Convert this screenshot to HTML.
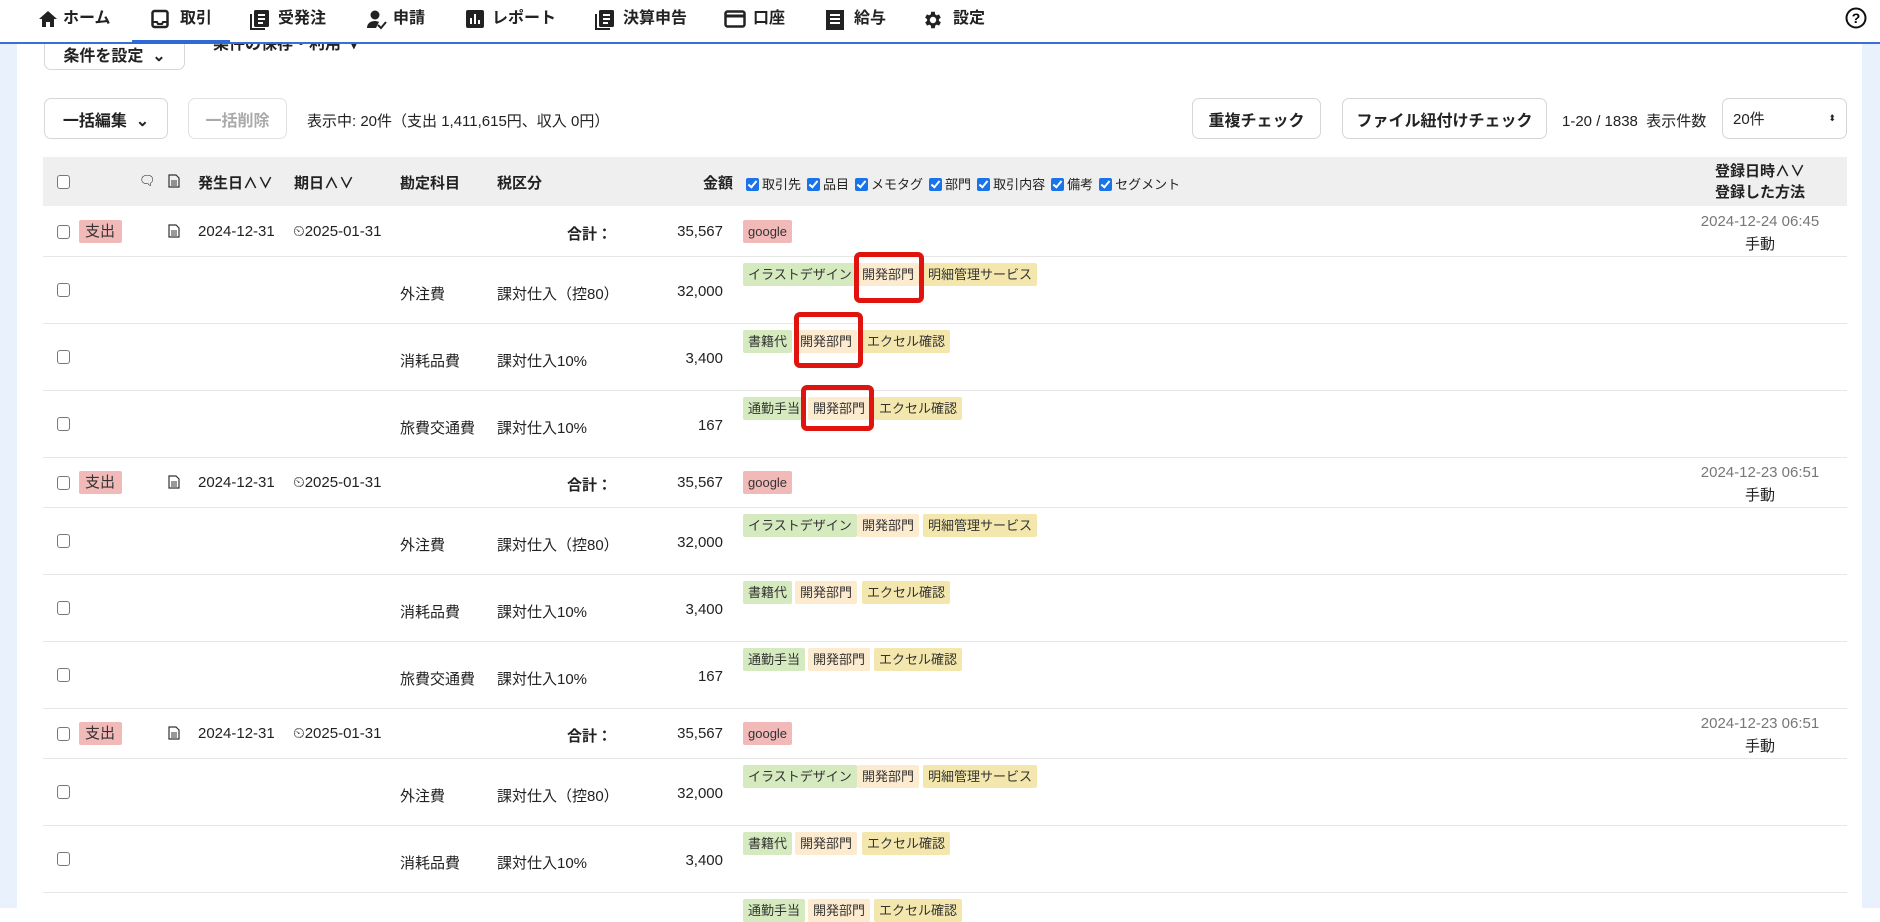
<!DOCTYPE html>
<html><head><meta charset="utf-8">
<style>
*{box-sizing:border-box;margin:0;padding:0}
body{width:1880px;height:908px;overflow:hidden;background:#fff;font-family:"Liberation Sans","Noto Sans CJK JP",sans-serif;color:#222;font-size:15px;position:relative}
.a{position:absolute;white-space:nowrap}
.nav{position:absolute;left:0;top:0;width:1880px;height:44px;border-bottom:2px solid #3b6fd8;background:#fff;z-index:5}
.ni{position:absolute;top:9px;font-weight:bold;font-size:16px;line-height:20px}
.ic{position:absolute;top:9px}
.btn{position:absolute;border:1px solid #d6d6d6;border-radius:7px;background:#fff;font-weight:bold;font-size:16px;display:flex;align-items:center;justify-content:center;white-space:nowrap}
.cb{position:absolute;width:13px;height:14px;border:1px solid #777;border-radius:3px;background:#fff}
.tag{position:absolute;height:23px;line-height:23px;font-size:13px;padding:0 5px;border-radius:2px;color:#333;white-space:nowrap}
.g{background:#d5eabf}.p{background:#fdebcf}.y{background:#f4e7ad}.r{background:#f2b9b9}
.line{position:absolute;left:43px;width:1804px;height:1px;background:#e6e6e6}
.red{position:absolute;border:5px solid #e0140e;border-radius:6px}
.r2{text-align:right}
.bc{display:inline-block;width:13px;height:13px;background:#1a73e8;border-radius:2px;vertical-align:-2px;margin:0 3px 0 6px;position:relative}
.bc:after{content:"";position:absolute;left:4px;top:1px;width:3px;height:7px;border:solid #fff;border-width:0 2px 2px 0;transform:rotate(40deg)}
</style></head><body>
<div class="a" style="left:0;top:44px;width:17px;height:864px;background:#e9f1fd"></div>
<div class="a" style="left:1862px;top:44px;width:18px;height:864px;background:#e9f1fd"></div>

<div class="nav">
<svg class="ic" style="left:38px" width="20" height="20" viewBox="0 0 20 20"><path d="M10 2L1 10h3v8h4v-5h4v5h4v-8h3z" fill="#222"/></svg>
<div class="ni" style="left:63px">ホーム</div>
<svg class="ic" style="left:150px" width="20" height="20" viewBox="0 0 20 20"><rect x="2.5" y="2" width="15" height="16" rx="2" fill="none" stroke="#222" stroke-width="2.5"/><path d="M3 13h4l1 2h4l1-2h4" fill="none" stroke="#222" stroke-width="2"/></svg>
<div class="ni" style="left:180px">取引</div>
<div class="a" style="left:132px;top:40px;width:98px;height:4px;background:#2d6ad6"></div>
<svg class="ic" style="left:249px" width="22" height="22" viewBox="0 0 22 22"><rect x="5" y="1" width="15" height="17" rx="1.5" fill="#222"/><path d="M2 5v15h14" fill="none" stroke="#222" stroke-width="2"/><path d="M9 6h7M9 10h7M9 14h5" stroke="#fff" stroke-width="2"/></svg>
<div class="ni" style="left:278px">受発注</div>
<svg class="ic" style="left:366px" width="22" height="22" viewBox="0 0 22 22"><circle cx="9" cy="6" r="4.5" fill="#222"/><path d="M1 19c0-5 4-7 8-7 2 0 3 .5 4 1l-3 6z" fill="#222"/><path d="M12 16l3 3 5-6" fill="none" stroke="#222" stroke-width="2"/></svg>
<div class="ni" style="left:393px">申請</div>
<svg class="ic" style="left:465px" width="20" height="20" viewBox="0 0 20 20"><rect x="1" y="1" width="18" height="18" rx="2" fill="#222"/><path d="M6 9v6M10 5v10M14 11v4" stroke="#fff" stroke-width="2"/></svg>
<div class="ni" style="left:492px">レポート</div>
<svg class="ic" style="left:594px" width="22" height="22" viewBox="0 0 22 22"><rect x="5" y="1" width="15" height="17" rx="1.5" fill="#222"/><path d="M2 5v15h14" fill="none" stroke="#222" stroke-width="2"/><path d="M9 6h7M9 10h7M9 14h5" stroke="#fff" stroke-width="2"/></svg>
<div class="ni" style="left:623px">決算申告</div>
<svg class="ic" style="left:724px" width="22" height="20" viewBox="0 0 22 20"><rect x="1.5" y="2.5" width="19" height="15" rx="2" fill="none" stroke="#222" stroke-width="2.5"/><path d="M2 7h18" stroke="#222" stroke-width="3"/></svg>
<div class="ni" style="left:753px">口座</div>
<svg class="ic" style="left:825px" width="20" height="22" viewBox="0 0 20 22"><rect x="1" y="1" width="18" height="20" fill="#222"/><path d="M5 6h10M5 10h10M5 14h10" stroke="#fff" stroke-width="2"/></svg>
<div class="ni" style="left:854px">給与</div>
<svg class="ic" style="left:922px" width="22" height="22" viewBox="0 0 24 24"><path d="M19.4 13a7.5 7.5 0 000-2l2.1-1.6-2-3.5-2.5 1a7.3 7.3 0 00-1.7-1L15 3h-4l-.4 2.9a7.3 7.3 0 00-1.7 1l-2.5-1-2 3.5L6.6 11a7.5 7.5 0 000 2l-2.1 1.6 2 3.5 2.5-1a7.3 7.3 0 001.7 1L11 21h4l.4-2.9a7.3 7.3 0 001.7-1l2.5 1 2-3.5zM13 15.5a3.5 3.5 0 110-7 3.5 3.5 0 010 7z" fill="#222" transform="translate(-1 0)"/></svg>
<div class="ni" style="left:953px">設定</div>
<svg class="ic" style="left:1845px;top:7px" width="22" height="22" viewBox="0 0 22 22"><circle cx="11" cy="11" r="9.5" fill="none" stroke="#111" stroke-width="2"/><text x="11" y="16" text-anchor="middle" font-size="14" font-weight="bold" font-family="Liberation Sans">?</text></svg>
</div>

<div class="btn" style="left:44px;top:20px;width:141px;height:50px;border-radius:0 0 7px 7px;align-items:flex-start"><span style="margin-top:21px">条件を設定 &nbsp;⌄</span></div>
<div class="a" style="left:213px;top:35px;font-weight:bold;font-size:16px;line-height:20px">条件の保存・利用 &nbsp;▾</div>

<div class="btn" style="left:44px;top:98px;width:124px;height:41px">一括編集 &nbsp;⌄</div>
<div class="btn" style="left:188px;top:98px;width:99px;height:41px;color:#aaa;border-color:#e2e2e2">一括削除</div>
<div class="a" style="left:307px;top:110px;font-size:15px">表示中: 20件（支出 1,411,615円、収入 0円）</div>

<div class="btn" style="left:1192px;top:98px;width:129px;height:41px">重複チェック</div>
<div class="btn" style="left:1342px;top:98px;width:205px;height:41px">ファイル紐付けチェック</div>
<div class="a" style="left:1562px;top:110px;font-size:15px">1-20 / 1838 &nbsp;表示件数</div>
<div class="btn" style="left:1722px;top:98px;width:125px;height:41px;justify-content:space-between;padding:0 10px;font-weight:normal;font-size:15px"><span>20件</span><span style="font-size:9px">⬍</span></div>

<div class="a" style="left:43px;top:157px;width:1804px;height:49px;background:#efefef"></div>
<div class="cb" style="left:57px;top:175px"></div>
<div class="a" style="left:139px;top:173px;font-size:13px">🗨</div>
<svg class="a" style="left:168px;top:174px" width="12" height="14" viewBox="0 0 12 14"><path d="M1 1h7l3 3v9H1z" fill="none" stroke="#333" stroke-width="1.2"/><path d="M3 7h6M3 9h6M3 11h6" stroke="#333"/></svg>
<div class="a" style="left:198px;top:172px;font-weight:bold;font-size:15px">発生日∧∨</div>
<div class="a" style="left:294px;top:172px;font-weight:bold;font-size:15px">期日∧∨</div>
<div class="a" style="left:400px;top:172px;font-weight:bold;font-size:15px">勘定科目</div>
<div class="a" style="left:497px;top:172px;font-weight:bold;font-size:15px">税区分</div>
<div class="a" style="left:703px;top:172px;font-weight:bold;font-size:15px">金額</div>
<div class="a" style="left:740px;top:174px;font-size:13px"><span class="bc"></span>取引先<span class="bc"></span>品目<span class="bc"></span>メモタグ<span class="bc"></span>部門<span class="bc"></span>取引内容<span class="bc"></span>備考<span class="bc"></span>セグメント</div>
<div class="a" style="left:1700px;top:161px;width:120px;text-align:center;font-weight:bold;font-size:15px;line-height:21px">登録日時∧∨<br>登録した方法</div>

<!-- group 1 -->
<div class="cb" style="left:57px;top:225px"></div>
<div class="tag r" style="left:79px;top:220px;height:23px;width:43px;font-size:15px;padding:0 6px">支出</div>
<svg class="a" style="left:168px;top:224px" width="12" height="14" viewBox="0 0 12 14"><path d="M1 1h7l3 3v9H1z" fill="none" stroke="#333" stroke-width="1.2"/><path d="M3 7h6M3 9h6M3 11h6" stroke="#333"/></svg>
<div class="a" style="left:198px;top:223px">2024-12-31</div>
<div class="a" style="left:293px;top:223px">⏲2025-01-31</div>
<div class="a" style="left:540px;top:223px;width:72px;text-align:right;font-weight:bold">合計：</div>
<div class="a r2" style="left:640px;top:223px;width:83px">35,567</div>
<div class="tag r" style="left:743px;top:220px">google</div>
<div class="a" style="left:1680px;top:213px;width:160px;text-align:center;color:#777">2024-12-24 06:45</div>
<div class="a" style="left:1680px;top:233px;width:160px;text-align:center">手動</div>
<div class="line" style="top:256px"></div>

<div class="cb" style="left:57px;top:283px"></div>
<div class="a" style="left:400px;top:283px">外注費</div><div class="a" style="left:497px;top:283px">課対仕入（控80）</div><div class="a r2" style="left:640px;top:283px;width:83px">32,000</div>
<div class="tag g" style="left:743px;top:263px">イラストデザイン</div><div class="tag p" style="left:857px;top:263px">開発部門</div><div class="tag y" style="left:923px;top:263px">明細管理サービス</div>
<div class="line" style="top:323px"></div>

<div class="cb" style="left:57px;top:350px"></div>
<div class="a" style="left:400px;top:350px">消耗品費</div><div class="a" style="left:497px;top:350px">課対仕入10%</div><div class="a r2" style="left:640px;top:350px;width:83px">3,400</div>
<div class="tag g" style="left:743px;top:330px">書籍代</div><div class="tag p" style="left:795px;top:330px">開発部門</div><div class="tag y" style="left:862px;top:330px">エクセル確認</div>
<div class="line" style="top:390px"></div>

<div class="cb" style="left:57px;top:417px"></div>
<div class="a" style="left:400px;top:417px">旅費交通費</div><div class="a" style="left:497px;top:417px">課対仕入10%</div><div class="a r2" style="left:640px;top:417px;width:83px">167</div>
<div class="tag g" style="left:743px;top:397px">通勤手当</div><div class="tag p" style="left:808px;top:397px">開発部門</div><div class="tag y" style="left:874px;top:397px">エクセル確認</div>
<div class="line" style="top:457px"></div>

<div class="red" style="left:854px;top:252px;width:70px;height:51px"></div>
<div class="red" style="left:794px;top:312px;width:69px;height:56px"></div>
<div class="red" style="left:801px;top:385px;width:73px;height:46px"></div>

<!-- group 2 -->
<div class="cb" style="left:57px;top:476px"></div>
<div class="tag r" style="left:79px;top:471px;width:43px;font-size:15px;padding:0 6px">支出</div>
<svg class="a" style="left:168px;top:475px" width="12" height="14" viewBox="0 0 12 14"><path d="M1 1h7l3 3v9H1z" fill="none" stroke="#333" stroke-width="1.2"/><path d="M3 7h6M3 9h6M3 11h6" stroke="#333"/></svg>
<div class="a" style="left:198px;top:474px">2024-12-31</div>
<div class="a" style="left:293px;top:474px">⏲2025-01-31</div>
<div class="a" style="left:540px;top:474px;width:72px;text-align:right;font-weight:bold">合計：</div>
<div class="a r2" style="left:640px;top:474px;width:83px">35,567</div>
<div class="tag r" style="left:743px;top:471px">google</div>
<div class="a" style="left:1680px;top:464px;width:160px;text-align:center;color:#777">2024-12-23 06:51</div>
<div class="a" style="left:1680px;top:484px;width:160px;text-align:center">手動</div>
<div class="line" style="top:507px"></div>

<div class="cb" style="left:57px;top:534px"></div>
<div class="a" style="left:400px;top:534px">外注費</div><div class="a" style="left:497px;top:534px">課対仕入（控80）</div><div class="a r2" style="left:640px;top:534px;width:83px">32,000</div>
<div class="tag g" style="left:743px;top:514px">イラストデザイン</div><div class="tag p" style="left:857px;top:514px">開発部門</div><div class="tag y" style="left:923px;top:514px">明細管理サービス</div>
<div class="line" style="top:574px"></div>

<div class="cb" style="left:57px;top:601px"></div>
<div class="a" style="left:400px;top:601px">消耗品費</div><div class="a" style="left:497px;top:601px">課対仕入10%</div><div class="a r2" style="left:640px;top:601px;width:83px">3,400</div>
<div class="tag g" style="left:743px;top:581px">書籍代</div><div class="tag p" style="left:795px;top:581px">開発部門</div><div class="tag y" style="left:862px;top:581px">エクセル確認</div>
<div class="line" style="top:641px"></div>

<div class="cb" style="left:57px;top:668px"></div>
<div class="a" style="left:400px;top:668px">旅費交通費</div><div class="a" style="left:497px;top:668px">課対仕入10%</div><div class="a r2" style="left:640px;top:668px;width:83px">167</div>
<div class="tag g" style="left:743px;top:648px">通勤手当</div><div class="tag p" style="left:808px;top:648px">開発部門</div><div class="tag y" style="left:874px;top:648px">エクセル確認</div>
<div class="line" style="top:708px"></div>

<!-- group 3 -->
<div class="cb" style="left:57px;top:727px"></div>
<div class="tag r" style="left:79px;top:722px;width:43px;font-size:15px;padding:0 6px">支出</div>
<svg class="a" style="left:168px;top:726px" width="12" height="14" viewBox="0 0 12 14"><path d="M1 1h7l3 3v9H1z" fill="none" stroke="#333" stroke-width="1.2"/><path d="M3 7h6M3 9h6M3 11h6" stroke="#333"/></svg>
<div class="a" style="left:198px;top:725px">2024-12-31</div>
<div class="a" style="left:293px;top:725px">⏲2025-01-31</div>
<div class="a" style="left:540px;top:725px;width:72px;text-align:right;font-weight:bold">合計：</div>
<div class="a r2" style="left:640px;top:725px;width:83px">35,567</div>
<div class="tag r" style="left:743px;top:722px">google</div>
<div class="a" style="left:1680px;top:715px;width:160px;text-align:center;color:#777">2024-12-23 06:51</div>
<div class="a" style="left:1680px;top:735px;width:160px;text-align:center">手動</div>
<div class="line" style="top:758px"></div>

<div class="cb" style="left:57px;top:785px"></div>
<div class="a" style="left:400px;top:785px">外注費</div><div class="a" style="left:497px;top:785px">課対仕入（控80）</div><div class="a r2" style="left:640px;top:785px;width:83px">32,000</div>
<div class="tag g" style="left:743px;top:765px">イラストデザイン</div><div class="tag p" style="left:857px;top:765px">開発部門</div><div class="tag y" style="left:923px;top:765px">明細管理サービス</div>
<div class="line" style="top:825px"></div>

<div class="cb" style="left:57px;top:852px"></div>
<div class="a" style="left:400px;top:852px">消耗品費</div><div class="a" style="left:497px;top:852px">課対仕入10%</div><div class="a r2" style="left:640px;top:852px;width:83px">3,400</div>
<div class="tag g" style="left:743px;top:832px">書籍代</div><div class="tag p" style="left:795px;top:832px">開発部門</div><div class="tag y" style="left:862px;top:832px">エクセル確認</div>
<div class="line" style="top:892px"></div>

<div class="tag g" style="left:743px;top:899px">通勤手当</div><div class="tag p" style="left:808px;top:899px">開発部門</div><div class="tag y" style="left:874px;top:899px">エクセル確認</div>
</body></html>
